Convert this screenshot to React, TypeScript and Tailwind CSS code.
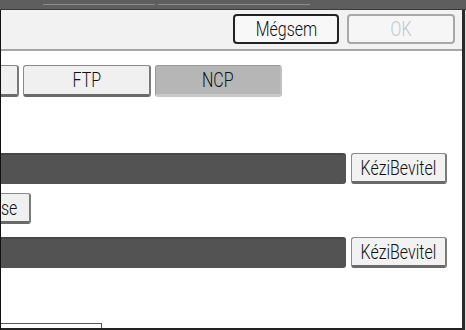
import React from "react";

const font = { fontFamily: 'Roboto, "Liberation Sans", sans-serif' };

function T({ children }: { children?: React.ReactNode }) {
  return <span className="inline-block scale-x-[0.8] font-light">{children}</span>;
}

function Btn({ children, className = "" }: { children?: React.ReactNode; className?: string }) {
  return (
    <div
      className={
        "flex items-center justify-center border border-[#8a8a8a] border-b-[3px] border-b-[#6a6a6a] border-r-[2px] border-r-[#7a7a7a] rounded-[3px] text-[20px] text-[#111] " +
        className
      }
    >
      {children}
    </div>
  );
}

export default function App() {
  return (
    <div className="w-[466px] h-[330px] bg-white flex flex-col overflow-hidden" style={font}>
      {/* top strip */}
      <div className="h-[10px] bg-[#5e5e5e] flex flex-col">
        <div className="h-[4px]" />
        <div className="h-[1px] flex">
          <div className="w-[43px]" />
          <div className="w-[112px] bg-[#8c8c8c]" />
          <div className="w-[3px]" />
          <div className="w-[152px] bg-[#8c8c8c]" />
        </div>
        <div className="flex-1 border-b border-[#3a3a3a]" />
      </div>
      {/* body */}
      <div className="flex-1 flex flex-row">
        <div className="w-[1px] bg-[#111]" />
        <div className="flex-1 flex flex-col border-b-2 border-[#222]">
          {/* header */}
          <div className="h-[41px] bg-[#f2f2f2] border-b-2 border-[#a6a6a6] flex flex-row justify-end items-start pt-[4px] pr-[7px] gap-[8px]">
            <div className="w-[106px] h-[30px] flex items-center justify-center border-2 border-[#222] rounded-[4px] bg-[#f8f8f8] text-[20px] text-[#111]">
              <T>Mégsem</T>
            </div>
            <div className="w-[108px] h-[30px] flex items-center justify-center border-2 border-[#a8a8a8] rounded-[4px] bg-[#f6f6f6] text-[20px] text-[#c4c4c4]">
              <T>OK</T>
            </div>
          </div>
          {/* tabs */}
          <div className="mt-[14px] flex flex-row gap-[4px] h-[32px]">
            <Btn className="w-[18px] bg-[#f0f0f0] rounded-l-none border-l-0" />
            <Btn className="w-[128px] bg-[#f0f0f0]"><T>FTP</T></Btn>
            <Btn className="w-[127px] bg-[#b6b6b6] border-[#9a9a9a] border-b-[#c8c8c8] border-r-[#c0c0c0]"><T>NCP</T></Btn>
          </div>
          {/* field 1 */}
          <div className="mt-[56px] flex flex-row h-[31px] gap-[5px]">
            <div className="w-[345px] bg-[#535353] rounded-r-[3px] border-t-2 border-[#464646]" />
            <Btn className="w-[96px] bg-[#f2f2f2]"><T>KéziBevitel</T></Btn>
          </div>
          <div className="mt-[9px] h-[31px] flex">
            <Btn className="w-[30px] bg-[#f0f0f0] rounded-l-none border-l-0 justify-start"><span className="inline-block scale-x-[0.8] font-light origin-left">se</span></Btn>
          </div>
          {/* field 2 */}
          <div className="mt-[13px] flex flex-row h-[31px] gap-[5px]">
            <div className="w-[345px] bg-[#535353] rounded-r-[3px] border-t-2 border-[#464646]" />
            <Btn className="w-[96px] bg-[#f2f2f2]"><T>KéziBevitel</T></Btn>
          </div>
          <div className="mt-[55px] flex-1 w-[101px] border-t border-r border-[#555]" />
        </div>
        <div className="w-[3px] bg-[#2a2a2a]" />
        <div className="w-[1px] bg-[#d8d8d8]" />
      </div>
    </div>
  );
}
